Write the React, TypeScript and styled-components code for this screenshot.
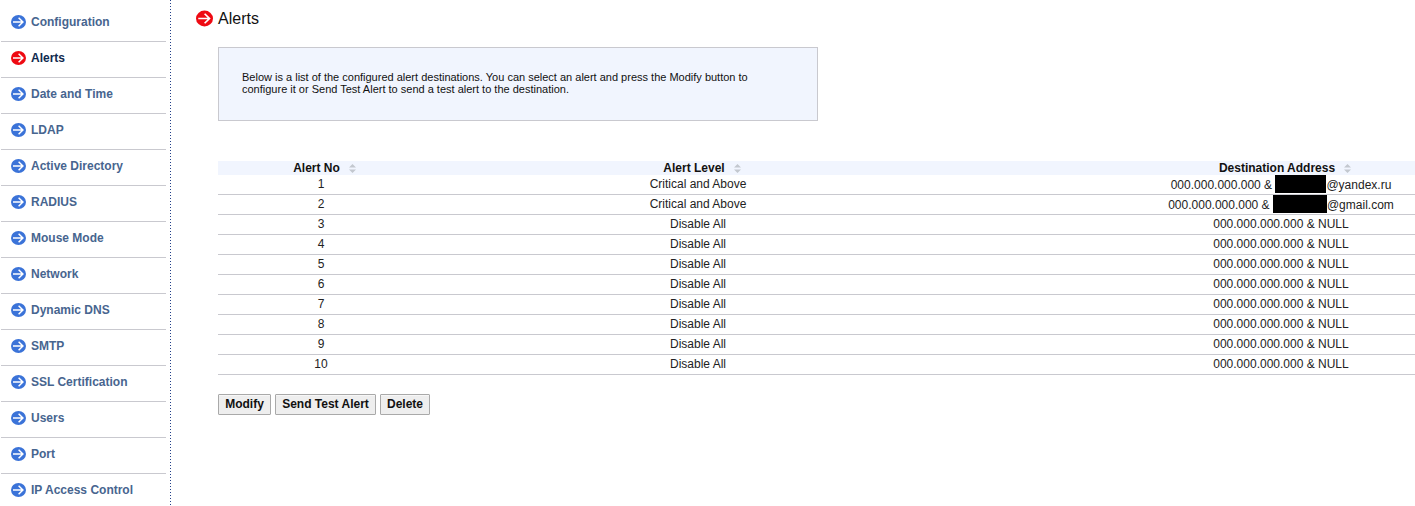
import React from "react";
import styled, { createGlobalStyle } from "styled-components";

const Global = createGlobalStyle`
  html, body { margin: 0; padding: 0; background: #fff; }
  body { font-family: "Liberation Sans", Arial, sans-serif; overflow: hidden; }
`;

const Page = styled.div`
  display: flex;
  width: 1415px;
  height: 506px;
  overflow: hidden;
`;

const Sidebar = styled.nav`
  flex: none;
  box-sizing: border-box;
  width: 171px;
  height: 506px;
  padding: 6px 5px 0 1px;
  background: linear-gradient(#23408a 0 1px, transparent 1px 3px) right top / 1px 3px repeat-y;
`;

const MenuItem = styled.div<{ $active?: boolean }>`
  display: flex;
  align-items: center;
  gap: 5px;
  box-sizing: border-box;
  height: 36px;
  padding: 0 0 4px 10px;
  font-size: 12px;
  font-weight: bold;
  color: ${(p) => (p.$active ? "#0f2a4f" : "#47658f")};
  border-bottom: 1px solid #c9c9cf;
  &:last-child { border-bottom: none; }
`;

const Main = styled.main`
  flex: 1;
  min-width: 0;
  padding: 8px 0 0 25px;
`;

const TitleRow = styled.div`
  display: flex;
  align-items: center;
  gap: 5px;
  height: 21px;
`;

const Title = styled.h1`
  margin: 0;
  font-size: 16px;
  font-weight: normal;
  color: #111;
`;

const Content = styled.div`
  margin: 18px 0 0 22px;
`;

const InfoBox = styled.div`
  box-sizing: border-box;
  width: 600px;
  height: 74px;
  padding: 23px 23px 0;
  background: #f1f5fe;
  border: 1px solid #c9c9cf;
  font-size: 11px;
  line-height: 12px;
  color: #111;
`;

const Table = styled.table`
  width: 1197px;
  margin-top: 40px;
  table-layout: fixed;
  border-collapse: collapse;
  font-size: 12px;
  color: #222;
`;

const HeadRow = styled.tr`
  background: #f1f5fe;
`;

const HeadCell = styled.th<{ $w: number; $pl: number }>`
  box-sizing: border-box;
  width: ${(p) => p.$w}px;
  height: 14px;
  padding: 0 0 0 ${(p) => p.$pl}px;
  font-size: 12px;
  line-height: 10px;
  font-weight: bold;
  color: #111;
  text-align: center;
  white-space: nowrap;
`;

const Row = styled.tr`
  height: 20px;
  border-bottom: 1px solid #c9c9cf;
  &:first-child { height: 19px; }
`;

const Cell = styled.td<{ $pl?: number }>`
  box-sizing: border-box;
  padding: 0 0 0 ${(p) => p.$pl ?? 0}px;
  line-height: 14px;
  text-align: center;
  white-space: nowrap;
`;

const SortGlyph = styled.svg`
  margin-left: 9px;
  vertical-align: -1px;
`;

const Redaction = styled.span<{ $w: number }>`
  display: inline-block;
  width: ${(p) => p.$w}px;
  height: 18px;
  vertical-align: -4px;
  background: #000;
`;

const Actions = styled.div`
  display: flex;
  gap: 4px;
  margin-top: 19px;
`;

const Button = styled.button<{ $w: number }>`
  box-sizing: border-box;
  width: ${(p) => p.$w}px;
  height: 21px;
  padding: 0;
  font-family: "Liberation Sans", Arial, sans-serif;
  font-size: 12px;
  font-weight: bold;
  color: #111;
  background: #eeeeee;
  border: 1px solid #a9a9a9;
  border-radius: 1px;
  box-shadow: inset 0 1px 0 #f7f7f7;
`;

const Bullet = ({ color, w, h }: { color: string; w: number; h: number }) => (
  <svg width={w} height={h} viewBox="0 0 15 14" style={{ flex: "none" }}>
    <ellipse cx="7.5" cy="7" rx="7.5" ry="7" fill={color} />
    <path d="M2 7H11.5M7.6 2.8L11.9 7 7.6 11.2" fill="none" stroke="#fff" strokeWidth="1.5" />
  </svg>
);

const Sort = () => (
  <SortGlyph width="7" height="9" viewBox="0 0 7 9">
    <path d="M3.5 0L7 3.4H0Z M3.5 9L0 5.6H7Z" fill="#c3c8cf" />
  </SortGlyph>
);

const menu = [
  "Configuration", "Alerts", "Date and Time", "LDAP", "Active Directory", "RADIUS",
  "Mouse Mode", "Network", "Dynamic DNS", "SMTP", "SSL Certification", "Users", "Port",
  "IP Access Control",
];

const rows = Array.from({ length: 10 }, (_, i) => i + 1);

export default function App() {
  return (
    <Page>
      <Global />
      <Sidebar>
        {menu.map((m) => (
          <MenuItem key={m} $active={m === "Alerts"}>
            <Bullet color={m === "Alerts" ? "#ee0a12" : "#3b73d8"} w={15} h={14} />
            {m}
          </MenuItem>
        ))}
      </Sidebar>
      <Main>
        <TitleRow>
          <Bullet color="#ee0a12" w={17} h={17} />
          <Title>Alerts</Title>
        </TitleRow>
        <Content>
          <InfoBox>
            Below is a list of the configured alert destinations. You can select an alert and press the Modify button to
            configure it or Send Test Alert to send a test alert to the destination.
          </InfoBox>
          <Table>
            <thead>
              <HeadRow>
                <HeadCell $w={206} $pl={7}>Alert No<Sort /></HeadCell>
                <HeadCell $w={548} $pl={8}>Alert Level<Sort /></HeadCell>
                <HeadCell $w={443} $pl={183}>Destination Address<Sort /></HeadCell>
              </HeadRow>
            </thead>
            <tbody>
              {rows.map((n) => (
                <Row key={n}>
                  <Cell>{n}</Cell>
                  <Cell>{n < 3 ? "Critical and Above" : "Disable All"}</Cell>
                  <Cell $pl={175}>
                    {n === 1 && <>000.000.000.000 & <Redaction $w={51} />@yandex.ru</>}
                    {n === 2 && <>000.000.000.000 & <Redaction $w={54} />@gmail.com</>}
                    {n > 2 && "000.000.000.000 & NULL"}
                  </Cell>
                </Row>
              ))}
            </tbody>
          </Table>
          <Actions>
            <Button $w={53}>Modify</Button>
            <Button $w={101}>Send Test Alert</Button>
            <Button $w={50}>Delete</Button>
          </Actions>
        </Content>
      </Main>
    </Page>
  );
}
